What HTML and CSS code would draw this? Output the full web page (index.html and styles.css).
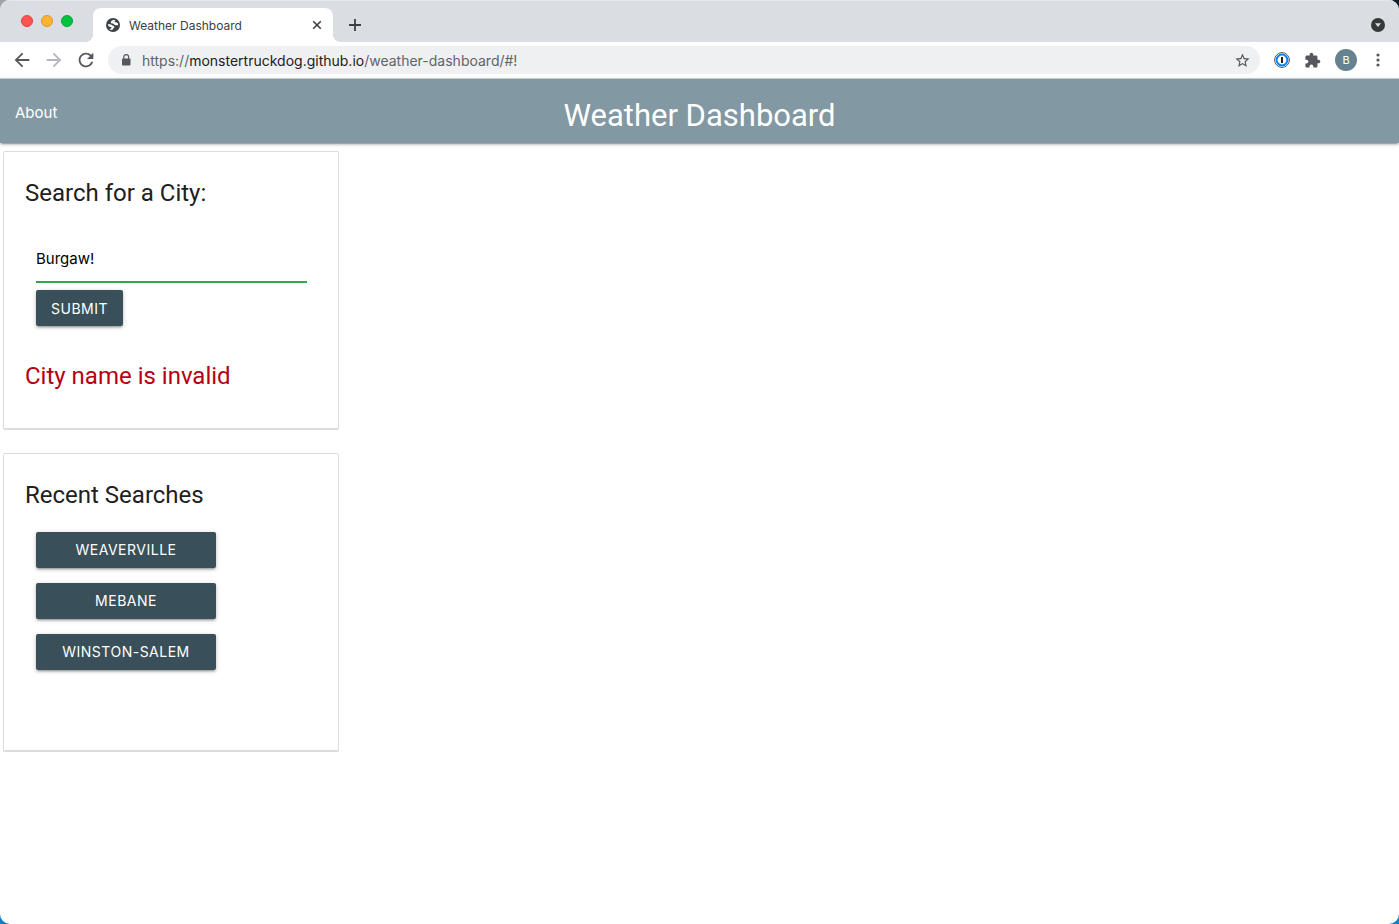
FILE: index.html
```html
<!DOCTYPE html>
<html lang="en">
<head>
<meta charset="utf-8">
<title>Weather Dashboard</title>
<link rel="stylesheet" href="styles.css">
</head>
<body>
<div class="window">
  <div class="tab-strip">
    <div class="lights"><span class="light red"></span><span class="light amber"></span><span class="light green"></span></div>
    <div class="tab">
      <svg class="globe" viewBox="0 0 14 14" width="14" height="14"><circle cx="7" cy="7" r="7" fill="#3c4043"/><path d="M7.600 1.700C5.800 2.200 4.700 3.300 4.700 4.500C4.900 6.200 7.600 5.300 8.100 6.300C8.400 7.300 9.300 7.500 12.200 7.200C12.200 4.500 10.800 3.900 9.200 4.300C8.200 4.400 8.300 3.600 9.600 2.700Z" fill="#fff"/><path d="M1.700 6.500C3.500 6.100 5.400 6.600 6.500 7.500C7.700 7.800 8.600 8.500 8.300 9.500C7.500 10.100 7.100 10.900 6.200 12.100C5 12 4 11.500 3.300 10.900L5.600 10.300C5.800 9.200 5.100 8.800 3.900 8.700C2.800 8.400 1.900 7.700 1.700 6.500Z" fill="#fff"/></svg>
      <span class="tab-title">Weather Dashboard</span>
      <button class="icon-btn" aria-label="Close tab"><svg viewBox="0 0 10 10" width="10" height="10"><path d="M1.200 1.200l7.600 7.600M8.800 1.200l-7.600 7.600" stroke="#3c4043" stroke-width="1.600"/></svg></button>
    </div>
    <button class="icon-btn new-tab" aria-label="New tab"><svg viewBox="0 0 12 12" width="12" height="12"><path d="M6 0v12M0 6h12" stroke="#3c4043" stroke-width="1.800"/></svg></button>
    <button class="icon-btn tab-search" aria-label="Search tabs"><svg viewBox="0 0 14 14" width="14" height="14"><circle cx="7" cy="7" r="7" fill="#35393c"/><path d="M4 5.200h6L7 9z" fill="#dadde1"/></svg></button>
  </div>
  <div class="toolbar">
    <div class="nav-buttons">
      <button class="icon-btn" aria-label="Back"><svg viewBox="0 0 24 24" width="22" height="22" fill="#54575b"><path d="M20 11H7.830l5.590-5.590L12 4l-8 8 8 8 1.410-1.410L7.830 13H20v-2z"/></svg></button>
      <button class="icon-btn" aria-label="Forward"><svg viewBox="0 0 24 24" width="22" height="22" fill="#b4b6b9"><path d="M12 4l-1.410 1.410L16.170 11H4v2h12.170l-5.580 5.590L12 20l8-8z"/></svg></button>
      <button class="icon-btn" aria-label="Reload"><svg viewBox="0 0 24 24" width="22" height="22" fill="#54575b"><path d="M17.650 6.350C16.200 4.900 14.210 4 12 4c-4.420 0-7.990 3.580-7.990 8s3.570 8 7.990 8c3.730 0 6.840-2.550 7.730-6h-2.080c-.82 2.330-3.040 4-5.650 4-3.310 0-6-2.690-6-6s2.690-6 6-6c1.660 0 3.140.69 4.220 1.780L13 11h7V4l-2.350 2.350z"/></svg></button>
    </div>
    <div class="address">
      <svg viewBox="0 0 10 12" width="10" height="12"><rect x="1" y="4.500" width="8.500" height="7" rx="1" fill="#54575b"/><path d="M2.800 5V3a2.400 2.400 0 0 1 4.900 0v2" fill="none" stroke="#54575b" stroke-width="1.200"/></svg>
      <span class="url">https://<span class="host">monstertruckdog.github.io</span>/weather-dashboard/#!</span>
      <button class="icon-btn" aria-label="Bookmark"><svg viewBox="0 0 24 24" width="17" height="17" fill="#54575b"><path d="M22 9.240l-7.190-.62L12 2 9.190 8.630 2 9.240l5.460 4.730L5.820 21 12 17.270 18.180 21l-1.630-7.030L22 9.240zM12 15.400l-3.760 2.270 1-4.280-3.320-2.880 4.380-.38L12 6.100l1.710 4.040 4.380.38-3.320 2.880 1 4.280L12 15.400z"/></svg></button>
    </div>
    <div class="extensions">
      <button class="icon-btn" aria-label="Password manager"><svg viewBox="0 0 16 16" width="16" height="16"><circle cx="8" cy="8" r="7.400" fill="#fff" stroke="#54575b" stroke-width="1"/><circle cx="8" cy="8" r="5.400" fill="#fff" stroke="#0a84f5" stroke-width="2"/><path d="M8 5v6" stroke="#222" stroke-width="2"/></svg></button>
      <button class="icon-btn" aria-label="Extensions"><svg viewBox="0 0 24 24" width="17" height="17" fill="#54575b"><path d="M20.500 11H19V7c0-1.100-.9-2-2-2h-4V3.500C13 2.120 11.880 1 10.500 1S8 2.120 8 3.500V5H4c-1.100 0-1.990.9-1.990 2v3.800H3.500c1.490 0 2.700 1.210 2.700 2.700s-1.210 2.700-2.700 2.700H2V20c0 1.100.9 2 2 2h3.800v-1.500c0-1.490 1.210-2.700 2.700-2.700 1.490 0 2.700 1.210 2.700 2.700V22H17c1.100 0 2-.9 2-2v-4h1.500c1.380 0 2.500-1.120 2.500-2.500S21.880 11 20.500 11z"/></svg></button>
      <button class="icon-btn avatar">B</button>
      <button class="icon-btn" aria-label="Menu"><svg viewBox="0 0 4 14" width="4" height="14" fill="#54575b"><circle cx="2" cy="2" r="1.600"/><circle cx="2" cy="7" r="1.600"/><circle cx="2" cy="12" r="1.600"/></svg></button>
    </div>
  </div>
  <nav class="navbar">
    <a class="about" href="#!">About</a>
    <h1 class="brand">Weather Dashboard</h1>
  </nav>
  <main class="content">
    <section class="card search">
      <label class="heading" for="city">Search for a City:</label>
      <form class="search-form">
        <input class="city" id="city" type="text" value="Burgaw!">
        <button class="btn" type="button">SUBMIT</button>
      </form>
      <p class="heading error">City name is invalid</p>
    </section>
    <section class="card recent">
      <h2 class="heading">Recent Searches</h2>
      <div class="history">
        <button class="btn">WEAVERVILLE</button>
        <button class="btn">MEBANE</button>
        <button class="btn">WINSTON-SALEM</button>
      </div>
    </section>
  </main>
</div>
</body>
</html>
```

FILE: styles.css
```css
* { box-sizing: border-box; }
body { margin: 0; background: linear-gradient(90deg, #9fa6ab, #101c28) top / 100% 50% no-repeat, #0f7fc4; font-family: Inter, "Noto Sans", sans-serif; }
.window { min-height: 100vh; background: #fff; border-radius: 10px; overflow: hidden; display: flex; flex-direction: column; }
button { font-family: inherit; border: 0; cursor: pointer; }
svg { display: block; }
.icon-btn { display: flex; align-items: center; justify-content: center; padding: 0; background: none; flex: none; }

.tab-strip { display: flex; height: 42px; padding-right: 14px; background: #dadde1; border-top: 1px solid #e4e7ea; }
.lights { display: flex; gap: 8px; padding: 14px 20px 0 21px; }
.light { width: 12px; height: 12px; border-radius: 50%; border: 1px solid; }
.red { background: #ff5350; border-color: #e5403d; }
.amber { background: #ffb233; border-color: #df9628; }
.green { background: #00c340; border-color: #00a834; }
.tab { position: relative; display: flex; align-items: center; width: 240px; margin-top: 7px; padding: 0 11px 0 13px; gap: 9px; background: #fff; border-radius: 8px 8px 0 0; }
.tab::before, .tab::after { content: ""; position: absolute; bottom: 0; width: 8px; height: 8px; }
.tab::before { left: -8px; background: radial-gradient(circle at 0 0, transparent 8px, #fff 8px); }
.tab::after { right: -8px; background: radial-gradient(circle at 100% 0, transparent 8px, #fff 8px); }
.tab-title { flex: 1; font-size: 12px; color: #3c4043; }
.new-tab { margin: 7px 0 0 16px; }
.tab-search { margin: 7px 0 0 auto; }

.toolbar { display: flex; align-items: center; height: 37px; padding-right: 19px; border-bottom: 1px solid #ced1d4; }
.nav-buttons { display: flex; gap: 10px; padding: 0 11px; }
.address { flex: 1; display: flex; align-items: center; gap: 11px; height: 28px; padding: 0 9px 0 13px; border-radius: 14px; background: #eff0f2; }
.url { flex: 1; font-size: 14px; color: #5f6368; }
.host { color: #202124; }
.extensions { display: flex; align-items: center; margin-left: 14px; gap: 14px; }
.avatar { width: 22px; height: 22px; border-radius: 50%; background: #668290; color: #fff; font-size: 11px; }
.extensions .icon-btn:last-child { margin-left: 5px; }

.navbar { display: grid; grid-template-columns: 1fr auto 1fr; height: 64px; background: #8298a2; color: #fff; box-shadow: 0 2px 2px rgba(0,0,0,.14), 0 1px 5px rgba(0,0,0,.12), 0 3px 1px -2px rgba(0,0,0,.2); }
.about { padding-left: 15px; font-size: 15px; line-height: 68px; color: inherit; text-decoration: none; }
.brand { margin: 0; font-family: Roboto, sans-serif; font-size: 31px; font-weight: 400; line-height: 74px; }

.content { display: flex; flex-direction: column; gap: 23px; width: 25%; min-width: 320px; padding: 8px 11px 0 3px; }
.card { padding: 22px 31px 0 21px; border: 1px solid #dcdcdc; border-bottom-width: 2px; border-radius: 2px; }
.search { padding-bottom: 33px; }
.recent { padding-bottom: 80px; }
.heading { display: block; margin: 0; font-family: Roboto, sans-serif; font-size: 24px; font-weight: 400; line-height: 38px; color: #212121; }
.search-form { padding: 27px 0 0 11px; margin-bottom: 31px; }
.city { display: block; width: 100%; height: 44px; margin-bottom: 7px; padding: 0 0 3px; border: 0; border-bottom: 2px solid #2fa84a; outline: 0; background: none; font-family: inherit; font-size: 15px; color: #000; }
.btn { height: 36px; padding: 0 15px; border-radius: 2px; background: #39505a; color: #fff; font-size: 14px; letter-spacing: 0.5px; box-shadow: 0 2px 2px rgba(0,0,0,.14), 0 3px 1px -2px rgba(0,0,0,.12), 0 1px 5px rgba(0,0,0,.2); }
.heading.error { color: #b50012; }
.history { display: flex; flex-direction: column; gap: 15px; width: 180px; margin: 18px 0 0 11px; }
.history .btn { padding: 0 0 1px; }
```
